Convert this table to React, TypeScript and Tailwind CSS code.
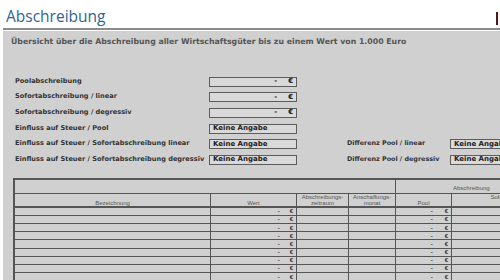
export default function App() {
  const summary = [
    { label: "Poolabschreibung", value: "euro" },
    { label: "Sofortabschreibung / linear", value: "euro" },
    { label: "Sofortabschreibung / degressiv", value: "euro" },
    { label: "Einfluss auf Steuer / Pool", value: "Keine Angabe" },
    { label: "Einfluss auf Steuer / Sofortabschreibung linear", value: "Keine Angabe", right: "Differenz Pool / linear" },
    { label: "Einfluss auf Steuer / Sofortabschreibung degressiv", value: "Keine Angabe", right: "Differenz Pool / degressiv" },
  ]
  const rows = Array.from({ length: 10 })

  const Box = ({ value }: { value: string }) => (
    <div className="w-[88px] h-[10px] border border-[#5c5c5c] bg-[#d9d9d9] flex items-center text-[7px] leading-none font-bold text-[#222] shrink-0">
      {value === "euro" ? (
        <div className="flex w-full justify-end pr-[3px] gap-[11px]">
          <span>-</span>
          <span>€</span>
        </div>
      ) : (
        <span className="pl-[3px] whitespace-nowrap">{value}</span>
      )}
    </div>
  )

  const cols = "grid grid-cols-[196px_86px_52px_47px_56px_130px]"

  return (
    <div className="w-[500px] h-[280px] overflow-hidden bg-white font-['DejaVu_Sans',sans-serif]">
      <header className="ml-[3px] h-[30px] border-b-2 border-[#8c8c8c] flex items-end justify-between pl-[3px]">
        <h1 className="font-['Open_Sans',sans-serif] text-[15.5px] leading-[22px] mb-[1px] text-[#2f6496]">Abschreibung</h1>
        <div className="w-[2px] h-[13px] bg-[#5a1414] mb-[3px] mr-[2px]" />
      </header>

      <main className="ml-[3px] mt-[1px] h-[249px] bg-[#d0d0d0] pt-[5px]">
        <p className="pl-[8px] text-[7.8px] leading-[12px] font-bold text-[#555] whitespace-nowrap">
          Übersicht über die Abschreibung aller Wirtschaftsgüter bis zu einem Wert von 1.000 Euro
        </p>

        <div className="mt-[26px] w-[600px]">
          {summary.map((s) => (
            <div key={s.label} className="h-[15.6px] flex items-center">
              <div className="w-[206px] shrink-0 pl-[12px] text-[6.6px] font-bold text-[#333] whitespace-nowrap">{s.label}</div>
              <Box value={s.value} />
              {s.right && (
                <>
                  <div className="ml-[50px] w-[103px] shrink-0 text-[6.4px] font-bold text-[#333] whitespace-nowrap">{s.right}</div>
                  <Box value={s.value} />
                </>
              )}
            </div>
          ))}
        </div>

        <div className="ml-[10px] mt-[10px] w-[600px] border-t-2 border-l-2 border-[#555] font-['Liberation_Sans',sans-serif] text-[6px] leading-[6px] text-[#555]">
          <div className="grid grid-cols-[381px_186px] h-[14px] border-b border-[#555]">
            <div className="border-r border-[#555]" />
            <div className="flex items-end pl-[57px] pb-[2px]">Abschreibung</div>
          </div>
          <div className={`${cols} h-[14px] border-b-2 border-[#555]`}>
            <div className="border-r border-[#555] flex items-end justify-center pb-[2px]">Bezeichnung</div>
            <div className="border-r border-[#555] flex items-end justify-center pb-[2px]">Wert</div>
            <div className="border-r border-[#555] flex items-end justify-center text-center pb-[2px]">Abschreibungs-<br />zeitraum</div>
            <div className="border-r border-[#555] flex items-end justify-center text-center pb-[2px]">Anschaffungs-<br />monat</div>
            <div className="border-r border-[#555] flex items-end justify-center pb-[2px]">Pool</div>
            <div className="border-r border-[#555] flex items-end justify-center text-center pb-[2px]">Sofortabschreibung<br />linear</div>
          </div>
          {rows.map((_, i) => (
            <div key={i} className={`${cols} h-[8.2px] border-b border-[#555] text-[#333]`}>
              <div className="border-r border-[#555]" />
              <div className="border-r border-[#555] flex items-center justify-end gap-[10px] pr-[3px] font-bold">
                <span>-</span>
                <span>€</span>
              </div>
              <div className="border-r border-[#555]" />
              <div className="border-r border-[#555]" />
              <div className="border-r border-[#555] flex items-center justify-end gap-[12px] pr-[3px] font-bold">
                <span>-</span>
                <span>€</span>
              </div>
              <div className="border-r border-[#555]" />
            </div>
          ))}
        </div>
      </main>
    </div>
  )
}
